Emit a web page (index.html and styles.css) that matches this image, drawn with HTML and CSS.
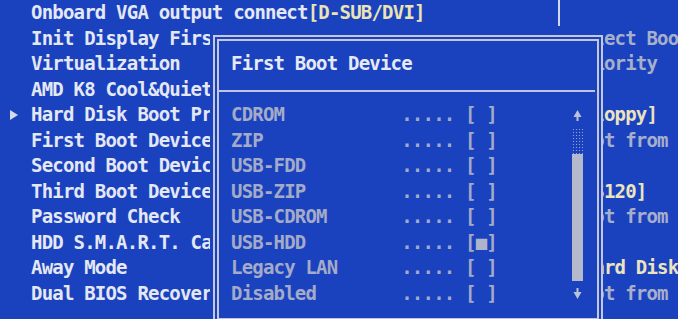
FILE: index.html
```html
<!DOCTYPE html>
<html lang="en">
<head>
  <meta charset="UTF-8" />
  <title>BIOS - Advanced BIOS Features</title>
  <link rel="stylesheet" href="styles.css">
</head>
<body>

  <div class="screen">
    <div class="main">
      <div class="row top">Onboard VGA output connect<span class="value">[D-SUB/DVI]</span></div>
      <div class="row">Init Display First</div>
      <div class="row">Virtualization</div>
      <div class="row">AMD K8 Cool&amp;Quiet control</div>
      <div class="row current"><span class="pointer"></span>Hard Disk Boot Priority</div>
      <div class="row">First Boot Device</div>
      <div class="row">Second Boot Device</div>
      <div class="row">Third Boot Device</div>
      <div class="row">Password Check</div>
      <div class="row">HDD S.M.A.R.T. Capability</div>
      <div class="row">Away Mode</div>
      <div class="row">Dual BIOS Recovery Source</div>
    </div>

    <div class="help">
      <div class="row">&nbsp;</div>
      <div class="row">Select Boot Device</div>
      <div class="row">Priority</div>
      <div class="row">&nbsp;</div>
      <div class="row value">[Floppy]</div>
      <div class="row">Boot from floppy</div>
      <div class="row">&nbsp;</div>
      <div class="row value">[LS120]</div>
      <div class="row">Boot from LS120</div>
      <div class="row">&nbsp;</div>
      <div class="row value">[Hard Disk]</div>
      <div class="row">Boot from HDD</div>
    </div>

    <!-- option popup over the menu -->
    <div class="popup">
      <div class="popup-box">
        <div class="popup-title">First Boot Device</div>
        <div class="popup-body">
          <ul class="options">
            <li>CDROM           ..... [ ]</li>
            <li>ZIP             ..... [ ]</li>
            <li>USB-FDD         ..... [ ]</li>
            <li>USB-ZIP         ..... [ ]</li>
            <li>USB-CDROM       ..... [ ]</li>
            <li>USB-HDD         ..... [<span class="mark">■</span>]</li>
            <li>Legacy LAN      ..... [ ]</li>
            <li>Disabled        ..... [ ]</li>
          </ul>
          <div class="scrollbar">
            <svg class="arrow" width="9" height="13" viewBox="0 0 9 13">
              <path d="M4.5 1 L8.5 8 L0.5 8 Z" fill="#bcc2d8"/>
              <rect x="3.5" y="8" width="2" height="4" fill="#bcc2d8"/>
            </svg>
            <div class="track"><div class="thumb"></div></div>
            <svg class="arrow" width="9" height="13" viewBox="0 0 9 13">
              <rect x="3.5" y="1" width="2" height="4" fill="#bcc2d8"/>
              <path d="M0.5 5 L8.5 5 L4.5 12 Z" fill="#bcc2d8"/>
            </svg>
          </div>
        </div>
      </div>
    </div>
  </div>

</body>
</html>
```

FILE: styles.css
```css
body {
  margin: 0;
  padding: 0;
  background: #1b42be;
}
.screen {
  position: relative;
  display: flex;
  width: 678px;
  height: 319px;
  overflow: hidden;
  background: #1b42be;
  font-family: 'DejaVu Sans Mono', 'Liberation Mono', monospace;
  font-size: 19px;
  font-weight: bold;
  letter-spacing: -0.8px;
  line-height: 25.5px;
  color: #e4e8f4;
}
.row {
  white-space: nowrap;
  height: 25.5px;
}
.main {
  width: 527px;
  padding-left: 31px;
  border-right: 2px solid #d3d7e8;
  flex-shrink: 0;
}
/* labels end where the popup starts */
.main .row {
  width: 179px;
  overflow: hidden;
}
.main .top {
  width: auto;
}
.main .current {
  width: 200px;
  margin-left: -21px;
}
.pointer {
  display: inline-block;
  width: 0;
  height: 0;
  border-left: 8px solid #d6dbec;
  border-top: 5px solid transparent;
  border-bottom: 5px solid transparent;
  margin-right: 13px;
  vertical-align: 1px;
}
.value {
  color: #ece3b4;
}
.help {
  flex: 1;
  padding-left: 12px;
  color: #a7afcb;
  overflow: hidden;
}
.help .value {
  color: #ebe4bf;
}

/* popup */
.popup {
  position: absolute;
  left: 210px;
  top: 26px;
  width: 390px;
  padding: 9px 0 0 3px;
  background: #1b42be;
}
.popup-box {
  box-sizing: border-box;
  height: 289px;
  border: 6px double #c3c8de;
}
.popup-title {
  padding: 10px 0 13.5px 12px;
  margin-right: 2px;
  border-bottom: 2px solid #bfc5dc;
  color: #e6eaf6;
}
.popup-body {
  display: flex;
  padding: 10px 14px 0 12px;
}
.options {
  flex: 1;
  list-style: none;
  margin: 0;
  padding: 0;
  color: #a3abc8;
}
.options li {
  height: 25.5px;
  white-space: pre;
}
.mark {
  color: #aeb4cc;
}
.scrollbar {
  width: 11px;
  display: flex;
  flex-direction: column;
  align-items: center;
}
.arrow {
  display: block;
  margin: 6.5px 0 6px;
}
.track {
  width: 11px;
  height: 153px;
  display: flex;
  flex-direction: column;
  justify-content: flex-end;
  background-image: radial-gradient(circle, #9aa3cc 0.7px, transparent 1px);
  background-size: 3px 3px;
}
.thumb {
  height: 127px;
  background: #b4b9cb;
}
```
